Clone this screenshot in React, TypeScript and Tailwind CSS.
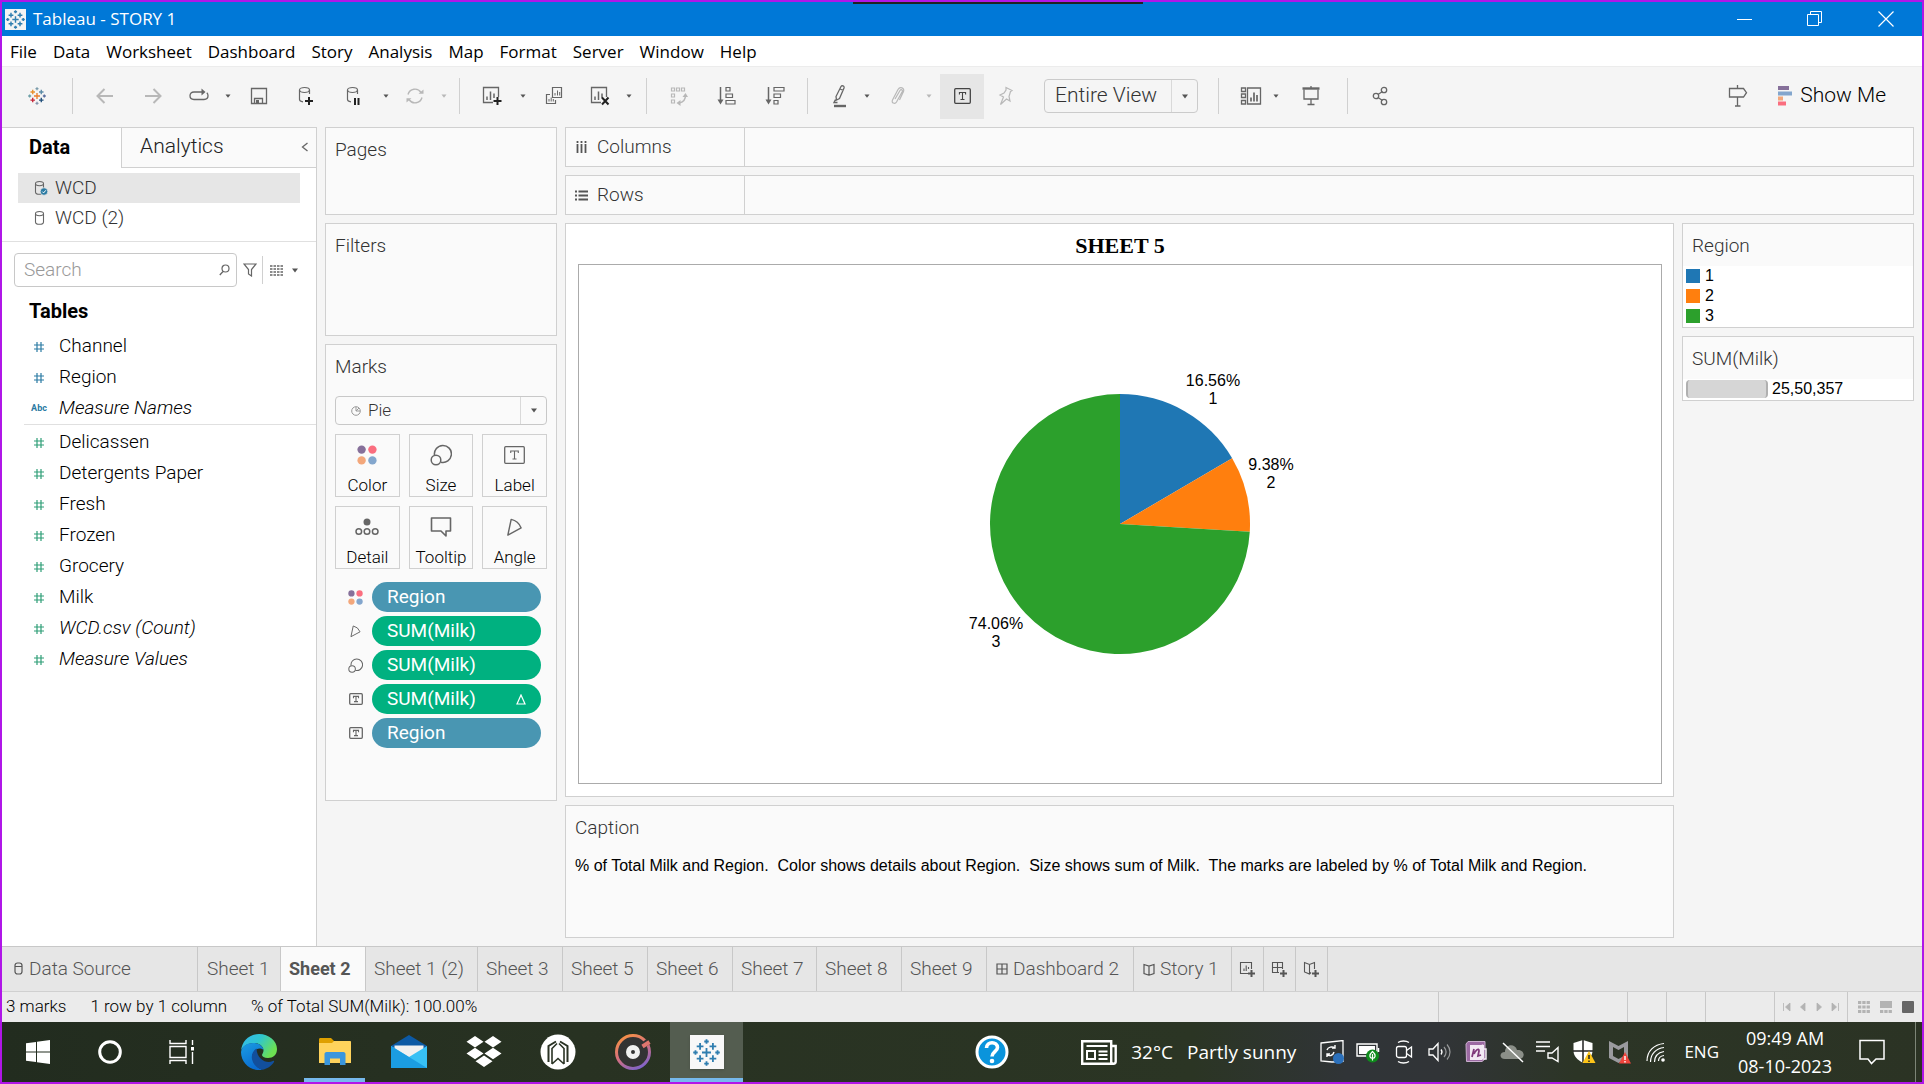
import React from "react";

type SvgProps = { w: number; h: number; children: React.ReactNode; className?: string };

function Svg({ w, h, children, className = "" }: SvgProps) {
  return (
    <svg
      width={w}
      height={h}
      viewBox={`0 0 ${w} ${h}`}
      fill="none"
      stroke="currentColor"
      className={`shrink-0 ${className}`}
      aria-hidden="true"
    >
      {children}
    </svg>
  );
}

/* ---------- shared small drawings ---------- */

const plusMark = (x: number, y: number, r: number) => `M${x - r} ${y}H${x + r}M${x} ${y - r}V${y + r}`;

function TableauMark({ size, colors, weight }: { size: number; colors: string[]; weight: number }) {
  const [center, nw, ne, sw, se, n, e, s, w] = colors;
  return (
    <svg width={size} height={size} viewBox="0 0 24 24" fill="none" strokeWidth={weight} className="shrink-0" aria-hidden="true">
      <path d={plusMark(12, 12, 4)} stroke={center} />
      <path d={plusMark(6.3, 6.6, 3)} stroke={nw} />
      <path d={plusMark(17.7, 6.6, 3)} stroke={ne} />
      <path d={plusMark(6.3, 17.4, 3)} stroke={sw} />
      <path d={plusMark(17.7, 17.4, 3)} stroke={se} />
      <path d={plusMark(12, 2.2, 2)} stroke={n} />
      <path d={plusMark(21.8, 12, 2)} stroke={e} />
      <path d={plusMark(12, 21.8, 2)} stroke={s} />
      <path d={plusMark(2.2, 12, 2)} stroke={w} />
    </svg>
  );
}

const blueMark = Array(9).fill("#2f7eb0");
const colorMark = ["#ea7d2d", "#e8912f", "#5b8aa6", "#c4273a", "#1f4e79", "#7c9cab", "#5a6f9e", "#8494ad", "#6fa0a8"];

function Caret({ className = "text-[#555]" }: { className?: string }) {
  return (
    <Svg w={8} h={5} className={className}>
      <path d="M1 0.5h6L4 4.5z" fill="currentColor" stroke="none" />
    </Svg>
  );
}

function SmallCaret({ className = "text-[#555]" }: { className?: string }) {
  return (
    <Svg w={6} h={4} className={className}>
      <path d="M0.5 0.5h5L3 3.8z" fill="currentColor" stroke="none" />
    </Svg>
  );
}

function Cylinder({ className = "text-[#666]", checked = false }: { className?: string; checked?: boolean }) {
  return (
    <Svg w={15} h={16} className={className}>
      <ellipse cx="5.5" cy="3.6" rx="4" ry="2.1" strokeWidth="1.1" />
      <path d="M1.5 4v8c0 1.3 1.5 2.3 4 2.3s4-1 4-2.3V4" strokeWidth="1.1" />
      {checked && (
        <>
          <circle cx="10" cy="11.5" r="3.8" fill="#2b7ba3" stroke="#e6e6e6" strokeWidth="0.8" />
          <path d="M8.3 11.6l1.3 1.3 2.2-2.6" stroke="#fff" />
        </>
      )}
    </Svg>
  );
}

/* ---------- toolbar drawings ---------- */

const arrowLeft = (
  <Svg w={18} h={18}><path d="M17 9H2M8.5 2L1.5 9l7 7" strokeWidth="2" /></Svg>
);
const arrowRight = (
  <Svg w={18} h={18}><path d="M1 9h15M9.5 2l7 7-7 7" strokeWidth="2" /></Svg>
);
const redoIcon = (
  <Svg w={20} h={18}>
    <path d="M14 5H5c-2.500 0-4 1.500-4 3.800s1.500 3.700 4 3.700h10c2.500 0 4-1.500 4-3.700 0-1.300-.4-2.300-1.200-3" strokeWidth="1.300" />
    <path d="M12.500 1.500L16.500 5l-4 3.500z" fill="currentColor" stroke="none" />
  </Svg>
);
const saveIcon = (
  <Svg w={18} h={18}>
    <path d="M1.500 1.500h15v15h-15zM4.500 16.500v-5h8v5" strokeWidth="1.300" />
    <path d="M6 13h3v3.500H6z" fill="currentColor" stroke="none" />
  </Svg>
);
const dbBase = (
  <>
    <ellipse cx="6.500" cy="4" rx="5" ry="2.500" strokeWidth="1.200" />
    <path d="M1.500 4v9.500c0 1.300 1.300 2 3.500 2.300M11.500 4v4" strokeWidth="1.200" />
  </>
);
const dbPlus = (
  <Svg w={18} h={20}>{dbBase}<path d={plusMark(11, 15, 4)} stroke="#222" strokeWidth="2" /></Svg>
);
const dbPause = (
  <Svg w={18} h={20}>{dbBase}<path d="M9 12v7M12.500 12v7" stroke="#222" strokeWidth="2" /></Svg>
);
const refreshIcon = (
  <Svg w={18} h={18}>
    <path d="M2 7.500A7.200 7.200 0 0 1 15 5.500M16 10.500A7.200 7.200 0 0 1 3 12.500" strokeWidth="1.400" />
    <path d="M12.500 6.800h5V2.500zM5.500 11.200h-5v4.300z" fill="currentColor" stroke="none" />
  </Svg>
);
const sheetBase = (
  <>
    <path d="M11 16.500H1.500v-15h15V11" strokeWidth="1.300" />
    <path d="M5 14v-3.500M8.500 14V5.500M12 12V7.500" strokeWidth="1.500" />
  </>
);
const sheetPlus = (
  <Svg w={20} h={20}>{sheetBase}<path d={plusMark(15.5, 15, 4)} stroke="#222" strokeWidth="2" /></Svg>
);
const sheetClear = (
  <Svg w={20} h={20}>{sheetBase}<path d="M12 11.500l6.500 7M18.500 11.500l-6.500 7" stroke="#222" strokeWidth="2" /></Svg>
);
const duplicateIcon = (
  <Svg w={18} h={20}>
    <path d="M7.500 1.500h9v10h-9zM5 8.500H1.500v9h9V14" strokeWidth="1.200" />
    <path d="M10 9.500V7M12.500 9.500v-5M14.700 9.500V6M4 15.500V13M6.200 15.500v-4M8.300 15.500V13" />
  </Svg>
);
const swapIcon = (
  <Svg w={18} h={20}>
    <path d="M1.500 2h3v3h-3zM6.500 2h3v3h-3zM11.500 2h3v3h-3zM1.500 8h3v3h-3zM1.500 14h3v3h-3z" strokeWidth="1.200" />
    <path d="M15.500 9c0 5-2.500 7.500-6.500 8" strokeWidth="1.500" />
    <path d="M12.500 11l3-4 2.500 4zM10.500 14v6L6.500 17z" fill="currentColor" stroke="none" />
  </Svg>
);
const sortAsc = (
  <Svg w={20} h={20}>
    <path d="M3.500 1v14" strokeWidth="1.500" />
    <path d="M.5 13.500h6l-3 5z" fill="currentColor" stroke="none" />
    <path d="M9 1.500h4v3.500H9zM9 8h6.500v3.500H9zM9 14.500h9V18H9z" strokeWidth="1.200" />
  </Svg>
);
const sortDesc = (
  <Svg w={20} h={20}>
    <path d="M3.500 1v14" strokeWidth="1.500" />
    <path d="M.5 13.500h6l-3 5z" fill="currentColor" stroke="none" />
    <path d="M9 1.500h10v3.500H9zM9 8h6.500v3.500H9zM9 14.500h4V18H9z" strokeWidth="1.200" />
  </Svg>
);
const penIcon = (
  <Svg w={14} h={24}>
    <path d="M8 2.500c1-1.500 3.500-.5 3 1.500L6.500 14.500l-3 1.500-.5-3.500zM7 5l3.500 1.500M2.500 15.500L1 18.500h3.500" strokeWidth="1.300" />
    <path d="M1 22h12" strokeWidth="2.400" />
  </Svg>
);
const clipIcon = (
  <Svg w={16} h={20}>
    <path d="M5 13l5-8.500c1-1.500 3-.5 2.300 1L6.500 16c-1.500 2.500-5.500 1-4-2L8 3.500c2-3.500 7-1.500 5.500 2L9.500 14" strokeWidth="1.200" />
  </Svg>
);
const pinIcon = (
  <Svg w={16} h={20}>
    <path d="M8 1.500l6 3-1.500 1-1.500 5 1 4.500-3.500-2L2.500 18.500l3-7.500L2 9l4-2L8 4z" strokeWidth="1.200" />
  </Svg>
);
const cardsIcon = (
  <Svg w={22} h={20}>
    <path d="M1.500 2h4v3.500h-4zM1.500 8h4v3.500h-4zM1.500 14.500h4V18h-4zM7.500 2h13v16h-13z" strokeWidth="1.300" />
    <path d="M11 15.500v-4M14 15.500v-9M17 15.500V9" strokeWidth="1.700" />
  </Svg>
);
const presentIcon = (
  <Svg w={18} h={20}>
    <path d="M.5 2.500h17" strokeWidth="2.400" />
    <path d="M2 3.500v9.500h14V3.500M9 13v6M5.500 18.500h7M9 0v2" strokeWidth="1.300" />
  </Svg>
);
const shareIcon = (
  <Svg w={16} h={20}>
    <path d="M6 8.500l4.500-3M6 11.500l4.500 3" strokeWidth="1.300" />
    <circle cx="4" cy="10" r="2.700" strokeWidth="1.300" />
    <circle cx="12" cy="4" r="2.700" strokeWidth="1.300" />
    <circle cx="12" cy="16" r="2.700" strokeWidth="1.300" />
  </Svg>
);
const signpostIcon = (
  <Svg w={20} h={22}>
    <path d="M1.500 3.500h14l3 4.200-3 4.300h-14zM9.500 12v9.500M7 21h5.500M9.500 0v3.500" strokeWidth="1.300" />
  </Svg>
);

function LabelIcon({ w, h }: { w: number; h: number }) {
  const cx = w / 2;
  const top = h * 0.28;
  const bottom = h * 0.72;
  const half = w * 0.18;
  return (
    <Svg w={w} h={h}>
      <rect x="0.7" y="0.7" width={w - 1.4} height={h - 1.4} rx="1" strokeWidth="1.300" />
      <path
        d={`M${cx - half} ${top + 2}V${top}H${cx + half}V${top + 2}M${cx} ${top}V${bottom}M${cx - 2} ${bottom}H${cx + 2}`}
        strokeWidth="1.100"
      />
    </Svg>
  );
}

function ColorDots({ size }: { size: number }) {
  return (
    <svg width={size} height={size} viewBox="0 0 20 20" className="shrink-0" aria-hidden="true">
      <circle cx="4.600" cy="4.600" r="4.200" fill="#86709a" />
      <circle cx="15.400" cy="4.600" r="4.200" fill="#fa6e7f" />
      <circle cx="4.600" cy="15.400" r="4.200" fill="#f3a77b" />
      <circle cx="15.400" cy="15.400" r="4.200" fill="#83a6cd" />
    </svg>
  );
}

function SizeIcon({ size }: { size: number }) {
  return (
    <svg width={size} height={size} viewBox="0 0 22 22" fill="none" stroke="currentColor" strokeWidth="1.500" className="shrink-0" aria-hidden="true">
      <path d="M4.500 11.200A8.500 8.500 0 1 1 11 18.200" />
      <circle cx="6" cy="16" r="4.800" />
    </svg>
  );
}

function AngleIcon({ size }: { size: number }) {
  return (
    <svg width={size} height={size} viewBox="0 0 20 20" fill="none" stroke="currentColor" strokeWidth="1.500" className="shrink-0" aria-hidden="true">
      <path d="M6.500 1.500Q14 3 17 10.500L3 18z" strokeLinejoin="round" />
    </svg>
  );
}

const detailIcon = (
  <Svg w={24} h={18}>
    <circle cx="12" cy="4" r="3.500" fill="currentColor" stroke="none" />
    <circle cx="3.800" cy="13.500" r="2.800" strokeWidth="1.500" />
    <circle cx="12" cy="13.500" r="2.800" strokeWidth="1.500" />
    <circle cx="20.200" cy="13.500" r="2.800" strokeWidth="1.500" />
  </Svg>
);
const tooltipIcon = (
  <Svg w={22} h={20}>
    <path d="M1.500 1h19v13h-4.500v5l-5-5H1.500z" strokeWidth="1.600" strokeLinejoin="round" />
  </Svg>
);

/* ---------- toolbar ---------- */

function Tool({ label, width, children, dim = false }: { label: string; width: string; children: React.ReactNode; dim?: boolean }) {
  return (
    <button
      type="button"
      aria-label={label}
      className={`flex h-full shrink-0 items-center justify-center ${width} ${dim ? "text-[#b8b8b8]" : "text-[#666]"}`}
    >
      {children}
    </button>
  );
}

function Sep({ className }: { className: string }) {
  return <span className={`h-9 w-px shrink-0 bg-[#d0d0d0] ${className}`} />;
}

function CaretTool({ label, dim = false }: { label: string; dim?: boolean }) {
  return (
    <Tool label={label} width="w-3.5" dim={dim}>
      <SmallCaret className={dim ? "text-[#b8b8b8]" : "text-[#555]"} />
    </Tool>
  );
}

function Toolbar() {
  return (
    <div className="flex h-[61px] items-center border-t border-[#ececec] bg-[#f5f5f5] pb-0.5">
      <Tool label="Start page" width="w-[70px]">
        <TableauMark size={18} colors={colorMark} weight={1.8} />
      </Tool>
      <Sep className="mr-2" />
      <Tool label="Undo" width="w-12" dim>{arrowLeft}</Tool>
      <Tool label="Redo" width="w-12" dim>{arrowRight}</Tool>
      <Tool label="Replay animation" width="w-11">{redoIcon}</Tool>
      <CaretTool label="Replay speed" />
      <Tool label="Save" width="w-12">{saveIcon}</Tool>
      <Tool label="New data source" width="w-12">{dbPlus}</Tool>
      <Tool label="Pause auto updates" width="w-12">{dbPause}</Tool>
      <CaretTool label="Auto update options" />
      <Tool label="Run update" width="w-11" dim>{refreshIcon}</Tool>
      <CaretTool label="Update options" dim />
      <Sep className="mr-2 ml-2" />
      <Tool label="New worksheet" width="w-12">{sheetPlus}</Tool>
      <CaretTool label="New worksheet options" />
      <Tool label="Duplicate sheet" width="w-12">{duplicateIcon}</Tool>
      <Tool label="Clear sheet" width="w-11">{sheetClear}</Tool>
      <CaretTool label="Clear options" />
      <Sep className="mr-2 ml-2.5" />
      <Tool label="Swap rows and columns" width="w-12" dim>{swapIcon}</Tool>
      <Tool label="Sort ascending" width="w-12">{sortAsc}</Tool>
      <Tool label="Sort descending" width="w-12">{sortDesc}</Tool>
      <Sep className="mr-3 ml-2" />
      <Tool label="Highlight" width="w-10">{penIcon}</Tool>
      <CaretTool label="Highlight options" />
      <Tool label="Group members" width="w-12" dim>{clipIcon}</Tool>
      <CaretTool label="Group options" dim />
      <button type="button" aria-label="Show mark labels" className="ml-1 flex h-[45px] w-11 shrink-0 items-center justify-center bg-[#e6e6e6] text-[#444]">
        <LabelIcon w={17} h={16} />
      </button>
      <Tool label="Fix axes" width="w-11" dim>{pinIcon}</Tool>
      <div className="ml-4 flex h-[34px] w-[154px] shrink-0 items-center rounded-sm border border-[#cbcbcb]">
        <select
          aria-label="Fit"
          className="h-full min-w-0 flex-1 appearance-none bg-transparent pl-2.5 text-[21px] font-light text-[#333] outline-none"
        >
          <option>Entire View</option>
        </select>
        <span className="flex h-full w-[26px] items-center justify-center border-l border-[#d9d9d9]">
          <Caret />
        </span>
      </div>
      <Sep className="mr-3.5 ml-5" />
      <Tool label="Show or hide cards" width="w-9">{cardsIcon}</Tool>
      <CaretTool label="Card options" />
      <Tool label="Presentation mode" width="w-14">{presentIcon}</Tool>
      <Sep className="mx-2" />
      <Tool label="Share" width="w-12">{shareIcon}</Tool>
      <span className="flex-1" />
      <Tool label="Guide" width="w-12">{signpostIcon}</Tool>
      <button type="button" className="mr-9 ml-4 flex h-full shrink-0 items-center gap-2 text-[21px] font-light text-black">
        <Svg w={14} h={20}>
          <path d="M0 2h11" stroke="#86709a" strokeWidth="4" />
          <path d="M0 7.500h14" stroke="#83a6cd" strokeWidth="4" />
          <path d="M0 12.500h5" stroke="#f3a77b" strokeWidth="4" />
          <path d="M0 17.500h8" stroke="#fa6e7f" strokeWidth="4" />
        </Svg>
        Show Me
      </button>
    </div>
  );
}

/* ---------- data pane ---------- */

const blue = "text-[#2b7ba3]";
const green = "text-[#2f9e77]";

const dimensions = [
  { name: "Channel", italic: false, abc: false },
  { name: "Region", italic: false, abc: false },
  { name: "Measure Names", italic: true, abc: true },
];
const measures = [
  { name: "Delicassen", italic: false },
  { name: "Detergents Paper", italic: false },
  { name: "Fresh", italic: false },
  { name: "Frozen", italic: false },
  { name: "Grocery", italic: false },
  { name: "Milk", italic: false },
  { name: "WCD.csv (Count)", italic: true },
  { name: "Measure Values", italic: true },
];

function FieldRow({ name, italic, abc = false, tone }: { name: string; italic: boolean; abc?: boolean; tone: string }) {
  return (
    <li className="flex h-[31px] items-center pl-7">
      <span className={`flex w-[18px] shrink-0 justify-center ${tone}`}>
        {abc ? (
          <span className="text-[9px] font-bold">Abc</span>
        ) : (
          <Svg w={12} h={12}>
            <path d="M4 1v10M8 1v10M1 4h10M1 8h10" strokeWidth="1.200" />
          </Svg>
        )}
      </span>
      <span className={`pl-[11px] text-[19px] font-light text-black ${italic ? "italic" : ""}`}>{name}</span>
    </li>
  );
}

function DataPane() {
  return (
    <aside className="flex w-[315px] shrink-0 flex-col border-t border-r border-[#d0d0d0] bg-white">
      <div className="flex h-10">
        <button type="button" className="w-[119px] pb-0.5 pl-[27px] text-left text-xl font-bold text-black">Data</button>
        <button type="button" className="flex flex-1 items-center justify-between border-b border-l border-[#d0d0d0] bg-[#fafafa] pr-[7px] pb-0.5 pl-[18px] text-[21px] font-light text-[#222]">
          Analytics
          <Svg w={8} h={10} className="text-[#666]"><path d="M6.500 1L1.500 5l5 4" strokeWidth="1.300" /></Svg>
        </button>
      </div>
      <ul className="px-4 pt-[5px] pb-2 text-[19px] font-light text-[#333]">
        <li className="flex h-[30px] items-center gap-1.5 bg-[#e6e6e6] pl-4"><Cylinder checked /> WCD</li>
        <li className="flex h-[30px] items-center gap-1.5 pl-4"><Cylinder /> WCD (2)</li>
      </ul>
      <div className="flex items-center border-t border-[#e0e0e0] pt-[11px] pl-3">
        <label className="flex h-[34px] w-[223px] items-center rounded-sm border border-[#c8c8c8] pr-1.5 pl-[9px]">
          <input aria-label="Search" placeholder="Search" className="min-w-0 flex-1 text-[19px] font-light outline-none placeholder:text-[#999]" />
          <Svg w={11} h={12} className="text-[#666]">
            <circle cx="6.500" cy="4.500" r="3.500" strokeWidth="1.200" /><path d="M4 7.500L.8 11" strokeWidth="1.300" />
          </Svg>
        </label>
        <button type="button" aria-label="Filter fields" className="flex w-[25px] justify-center text-[#666]">
          <Svg w={14} h={14}><path d="M1 1h12L8.500 6.500V13L5.500 11V6.500z" strokeWidth="1.200" /></Svg>
        </button>
        <span className="h-7 w-px bg-[#d0d0d0]" />
        <button type="button" aria-label="View as" className="flex flex-1 items-center gap-2 pl-[7px] text-[#666]">
          <Svg w={13} h={11}><path d="M0 1h13M0 4h13M0 7h13M0 10h13" strokeWidth="1.700" strokeDasharray="2.500 1" /></Svg>
          <Caret />
        </button>
      </div>
      <h2 className="pt-[10px] pb-[6px] pl-[27px] text-xl leading-7 font-bold text-black">Tables</h2>
      <ul>{dimensions.map((f) => <FieldRow key={f.name} {...f} tone={blue} />)}</ul>
      <div className="ml-[22px] border-t border-[#e0e0e0] pt-0.5" />
      <ul>{measures.map((f) => <FieldRow key={f.name} {...f} tone={green} />)}</ul>
    </aside>
  );
}

/* ---------- cards ---------- */

const markButtons: { label: string; icon: React.ReactNode }[] = [
  { label: "Color", icon: <ColorDots size={20} /> },
  { label: "Size", icon: <SizeIcon size={22} /> },
  { label: "Label", icon: <LabelIcon w={21} h={18} /> },
  { label: "Detail", icon: detailIcon },
  { label: "Tooltip", icon: tooltipIcon },
  { label: "Angle", icon: <AngleIcon size={19} /> },
];

const pills: { label: string; icon: React.ReactNode; discrete: boolean; calc?: boolean }[] = [
  { label: "Region", icon: <ColorDots size={15} />, discrete: true },
  { label: "SUM(Milk)", icon: <AngleIcon size={13} />, discrete: false },
  { label: "SUM(Milk)", icon: <SizeIcon size={15} />, discrete: false },
  { label: "SUM(Milk)", icon: <LabelIcon w={14} h={12} />, discrete: false, calc: true },
  { label: "Region", icon: <LabelIcon w={14} h={12} />, discrete: true },
];

const card = "border border-[#d0d0d0] bg-[#fafafa]";

function CardTitle({ children }: { children: React.ReactNode }) {
  return <h3 className="px-[9px] pt-2 text-[19px] leading-7 font-light text-[#333]">{children}</h3>;
}

function Cards() {
  return (
    <div className="flex w-[232px] shrink-0 flex-col gap-2">
      <section className={`h-[88px] ${card}`}><CardTitle>Pages</CardTitle></section>
      <section className={`h-[113px] ${card}`}><CardTitle>Filters</CardTitle></section>
      <section className={`h-[457px] ${card}`}>
        <CardTitle>Marks</CardTitle>
        <div className="mx-[9px] mt-[15px] flex h-[29px] items-center rounded-sm border border-[#c8c8c8]">
          <Svg w={10} h={10} className="ml-[15px] text-[#999]">
            <circle cx="5" cy="5" r="4.300" /><path d="M5 1v4h4M5 5l3-3" />
          </Svg>
          <select aria-label="Mark type" className="h-full min-w-0 flex-1 appearance-none pl-[7px] text-[17px] font-light text-[#333] outline-none">
            <option>Pie</option>
          </select>
          <span className="flex h-full w-[26px] items-center justify-center border-l border-[#d9d9d9]"><Caret /></span>
        </div>
        <div className="mx-[9px] mt-[9px] grid grid-cols-3 gap-x-[9px] gap-y-[9px]">
          {markButtons.map((b) => (
            <button key={b.label} type="button" className="flex h-[63px] flex-col items-center justify-between border border-[#d0d0d0] pt-2 text-[#666]">
              <span className="flex h-6 items-center">{b.icon}</span>
              <span className="text-[17px] leading-[22px] font-light text-black">{b.label}</span>
            </button>
          ))}
        </div>
        <ul className="mt-[13px] flex flex-col gap-1 pr-[15px] pl-[22px]">
          {pills.map((p, i) => (
            <li key={i} className="flex items-center gap-[9px] text-[#666]">
              <span className="flex w-[15px] justify-center">{p.icon}</span>
              <button
                type="button"
                className={`flex h-[30px] flex-1 items-center justify-between rounded-full px-[15px] text-[19px] text-white ${p.discrete ? "bg-[#4996b2]" : "bg-[#00b180]"}`}
              >
                {p.label}
                {p.calc && <Svg w={10} h={11}><path d="M5 1L9 10H1z" strokeWidth="1.200" /></Svg>}
              </button>
            </li>
          ))}
        </ul>
      </section>
    </div>
  );
}

/* ---------- chart ---------- */

const slices = [
  { region: "1", share: 16.56, color: "#1f77b4", x: 93, y: -138 },
  { region: "2", share: 9.38, color: "#ff7f0e", x: 151, y: -54 },
  { region: "3", share: 74.06, color: "#2ca02c", x: -124, y: 105 },
];

function PieChart() {
  const r = 130;
  const point = (t: number) => `${r * Math.sin(2 * Math.PI * t)} ${-r * Math.cos(2 * Math.PI * t)}`;
  let start = 0;
  return (
    <svg width="380" height="320" viewBox="-190 -160 380 320" role="img" aria-label="Share of Milk by Region">
      {slices.map((s) => {
        const end = start + s.share / 100;
        const d = `M0 0L${point(start)}A${r} ${r} 0 ${s.share > 50 ? 1 : 0} 1 ${point(end)}Z`;
        start = end;
        return <path key={s.region} d={d} fill={s.color} />;
      })}
      {slices.map((s) => (
        <g key={s.region} fontSize="16" textAnchor="middle" fill="#000" fontFamily="Liberation Sans, Arial, sans-serif">
          <text x={s.x} y={s.y}>{s.share.toFixed(2)}%</text>
          <text x={s.x} y={s.y + 18}>{s.region}</text>
        </g>
      ))}
    </svg>
  );
}

function Shelf({ label, icon }: { label: string; icon: React.ReactNode }) {
  return (
    <div className={`flex h-10 items-center ${card}`}>
      <div className="flex h-full w-[179px] items-center gap-[9px] border-r border-[#d0d0d0] pl-[9px] text-[19px] font-light text-[#333]">
        {icon}
        {label}
      </div>
    </div>
  );
}

function Canvas() {
  return (
    <div className="flex min-w-0 flex-1 flex-col gap-2">
      <Shelf
        label="Columns"
        icon={<Svg w={13} h={13}><path d="M2.500 0v2M6.500 0v2M10.500 0v2M2.500 3v9M6.500 3v9M10.500 3v9" className="text-[#555]" strokeWidth="1.800" /></Svg>}
      />
      <Shelf
        label="Rows"
        icon={<Svg w={13} h={13}><path d="M0 2.500h2M0 6.500h2M0 10.500h2M3.500 2.500H13M3.500 6.500H13M3.500 10.500H13" className="text-[#555]" strokeWidth="1.800" /></Svg>}
      />
      <div className="flex min-h-0 flex-1 gap-2">
        <div className="flex min-w-0 flex-1 flex-col gap-2">
          <section className="flex flex-1 flex-col border border-[#d0d0d0] bg-white pr-[11px] pb-3 pl-3">
            <h1 className="h-10 text-center font-['Liberation_Serif',serif] text-[22px] leading-[44px] font-bold text-black">SHEET 5</h1>
            <div className="flex flex-1 items-center justify-center border border-[#ababab]">
              <PieChart />
            </div>
          </section>
          <section className={`h-[133px] ${card}`}>
            <CardTitle>Caption</CardTitle>
            <p className="px-[9px] pt-3 font-['Liberation_Sans',Arial,sans-serif] text-base leading-6 whitespace-pre-wrap text-black">
              {"% of Total Milk and Region.  Color shows details about Region.  Size shows sum of Milk.  The marks are labeled by % of Total Milk and Region."}
            </p>
          </section>
        </div>
        <div className="flex w-[232px] shrink-0 flex-col gap-2">
          <section className={card}>
            <div className="h-[42px]"><CardTitle>Region</CardTitle></div>
            <ul className="bg-white pb-px font-['Liberation_Sans',Arial,sans-serif] text-base text-black">
              {slices.map((s) => (
                <li key={s.region} className="flex h-5 items-center gap-[5px] pl-[3px]">
                  <Svg w={14} h={14}><rect width="14" height="14" fill={s.color} stroke="none" /></Svg>
                  {s.region}
                </li>
              ))}
            </ul>
          </section>
          <section className={card}>
            <div className="h-[42px]"><CardTitle>SUM(Milk)</CardTitle></div>
            <div className="flex items-center gap-1 bg-white pt-px pb-0.5 pl-[3px] font-['Liberation_Sans',Arial,sans-serif] text-base leading-[18px] text-black">
              <span className="h-[18px] w-[82px] rounded-sm border-x-2 border-[#b0b0b0] bg-[#d6d6d6]" />
              25,50,357
            </div>
          </section>
        </div>
      </div>
    </div>
  );
}

/* ---------- sheet tabs and status ---------- */

const plusSmall = <path d={plusMark(12.5, 12.5, 3.5)} strokeWidth="2" />;

const tabs: { label: string; icon?: React.ReactNode; width: string; active?: boolean }[] = [
  { label: "Data Source", width: "w-[196px] pl-3", icon: <Svg w={10} h={14}><rect x="1" y="1" width="7" height="11" rx="2.500" strokeWidth="1.200" /><path d="M1 4.500h7" /></Svg> },
  { label: "Sheet 1", width: "w-[83px] pl-[9px]" },
  { label: "Sheet 2", width: "w-[85px] pl-2", active: true },
  { label: "Sheet 1 (2)", width: "w-[112px] pl-2" },
  { label: "Sheet 3", width: "w-[85px] pl-2" },
  { label: "Sheet 5", width: "w-[85px] pl-2" },
  { label: "Sheet 6", width: "w-[85px] pl-2" },
  { label: "Sheet 7", width: "w-[84px] pl-2" },
  { label: "Sheet 8", width: "w-[85px] pl-2" },
  { label: "Sheet 9", width: "w-[85px] pl-2" },
  { label: "Dashboard 2", width: "w-[147px] pl-[9px]", icon: <Svg w={12} h={12}><path d="M1 1h10v10H1zM6 1v10M1 6h10" strokeWidth="1.200" /></Svg> },
  { label: "Story 1", width: "w-[98px] pl-[9px]", icon: <Svg w={12} h={13}><path d="M1 1.500l5 1.500 5-1.500v9L6 12.200 1 10.500zM6 3v9" strokeWidth="1.200" /></Svg> },
];

const newTabs = [
  { label: "New worksheet", icon: <Svg w={17} h={17}><path d="M9 12.500H1.500v-11h11V8M5 10V7.500M7.200 10V4.500M9.500 8V6" strokeWidth="1.100" />{plusSmall}</Svg> },
  { label: "New dashboard", icon: <Svg w={17} h={17}><path d="M8 11.500H1.500v-10h10V8M6.500 1.500v10M1.500 6.500h10" strokeWidth="1.100" />{plusSmall}</Svg> },
  { label: "New story", icon: <Svg w={17} h={17}><path d="M8 11.500L6.500 13l-5-2V1.500l5 2 5-2V8M6.500 3.500V13" strokeWidth="1.100" />{plusSmall}</Svg> },
];

function SheetTabs() {
  return (
    <nav className="flex h-[45px] border-t border-[#c8c8c8] bg-[#e6e6e6] text-[19px] font-light text-[#555]">
      {tabs.map((t) => (
        <button
          key={t.label}
          type="button"
          className={`flex shrink-0 items-center gap-[5px] border-r border-[#c8c8c8] whitespace-nowrap ${t.width} ${t.active ? "bg-[#fafafa] text-lg font-bold" : ""}`}
        >
          {t.icon}
          {t.label}
        </button>
      ))}
      {newTabs.map((t) => (
        <button key={t.label} type="button" aria-label={t.label} className="flex w-8 shrink-0 items-center justify-center border-r border-[#c8c8c8]">
          {t.icon}
        </button>
      ))}
    </nav>
  );
}

function StatusBar() {
  return (
    <div className="flex h-[31px] items-center border-t border-[#d0d0d0] bg-[#ebebeb] text-[17px] font-light text-black">
      <span className="pl-1">3 marks</span>
      <span className="pl-6">1 row by 1 column</span>
      <span className="pl-6">% of Total SUM(Milk): 100.00%</span>
      <span className="flex-1" />
      <span className="h-full w-[189px] border-l border-[#c8c8c8]" />
      <span className="h-full w-[39px] border-l border-[#c8c8c8]" />
      <span className="h-full w-[39px] border-l border-[#c8c8c8]" />
      <span className="h-full w-[69px] border-l border-[#c8c8c8]" />
      <div className="flex h-full w-[73px] items-center justify-center gap-1 border-l border-[#c8c8c8] text-[#b3b3b3]">
        {["M2.500 2v8M9 2L4.500 6 9 10z", "M8 2L3.500 6 8 10z", "M4 2l4.500 4L4 10z", "M9.500 2v8M3 2l4.500 4L3 10z"].map((d) => (
          <button key={d} type="button" aria-label="Go to sheet" className="shrink-0">
            <Svg w={12} h={12}><path d={d} fill="currentColor" strokeWidth="0.8" /></Svg>
          </button>
        ))}
      </div>
      <div className="flex h-full w-[75px] items-center justify-between border-l border-[#c8c8c8] pr-2 pl-2.5">
        <button type="button" aria-label="Sheet sorter" className="text-[#b3b3b3]">
          <Svg w={12} h={12}><path d="M0 1.500h12M0 6h12M0 10.500h12" strokeWidth="3" strokeDasharray="3.300 1" /></Svg>
        </button>
        <button type="button" aria-label="Filmstrip" className="text-[#b3b3b3]">
          <Svg w={12} h={12}><path d="M0 3.500h12" strokeWidth="7" /><path d="M0 10.500h12" strokeWidth="3" strokeDasharray="3.300 1" /></Svg>
        </button>
        <button type="button" aria-label="Tabs" className="text-[#666]">
          <Svg w={12} h={12}><rect width="12" height="12" rx="1" fill="currentColor" stroke="none" /></Svg>
        </button>
      </div>
    </div>
  );
}

/* ---------- taskbar ---------- */

const startIcon = (
  <svg width="24" height="24" viewBox="0 0 24 24" fill="#fff" aria-hidden="true">
    <path d="M0 3.300L10 2v9.500H0zM11 1.800L24 0v11.500H11zM0 12.500h10V22L0 20.700zM11 12.500h13V24l-13-1.800z" />
  </svg>
);
const edgeIcon = (
  <svg width="36" height="36" viewBox="0 0 36 36" aria-hidden="true">
    <defs>
      <linearGradient id="edgeTop" x1="0" y1="0" x2="1" y2="0.500">
        <stop offset="0" stopColor="#35b8f0" /><stop offset="0.500" stopColor="#2fc6cf" /><stop offset="1" stopColor="#6ce052" />
      </linearGradient>
      <linearGradient id="edgeSide" x1="0" y1="0" x2="0.500" y2="1">
        <stop offset="0" stopColor="#1b9de2" /><stop offset="1" stopColor="#0a6bd0" />
      </linearGradient>
    </defs>
    <path d="M0 17C1 7 8 0 18 0c10 0 18 7 18 15 0 6-4 9-9 9-4 0-6-1.500-6-3 0-1 1.500-2 1.500-4.500C22.500 12 18 9 13 9 6 9 1 13 0 17z" fill="url(#edgeTop)" />
    <path d="M0 18C1 12 6 9 12 9c6 0 10 3 10.500 7-5-4-12 1-11 8 .8 6 5 10 9.500 11.700C10 38 0 29 0 18z" fill="url(#edgeSide)" />
    <path d="M15.500 14.500c-3 2-5.500 6-4.500 10.500 1 5 5 9.500 10 10.700 5-.5 9.500-3.700 12-7.700.5-1-.3-1.500-1.200-1C26 30 16 26 15.500 14.500z" fill="#124f9c" />
  </svg>
);
const folderIcon = (
  <svg width="32" height="28" viewBox="0 0 32 28" aria-hidden="true">
    <path d="M0 1.500C0 .5.500 0 1.500 0H12l3 3v5H0z" fill="#dfa000" />
    <path d="M0 5h13l2-2h16c.6 0 1 .4 1 1v21H0z" fill="#ffd35c" />
    <path d="M5.500 27V16c0-1 .8-2 2-2h17c1.200 0 2 1 2 2v11h-5.500v-6.500h-10V27z" fill="#3a96dd" />
  </svg>
);
const mailIcon = (
  <svg width="36" height="34" viewBox="0 0 36 34" aria-hidden="true">
    <path d="M0 11L18 0l18 11v5H0z" fill="#0c59a4" />
    <path d="M3.500 10.500h29V20L18 26 3.500 20z" fill="#f0f0f0" />
    <path d="M0 11l18 11L36 11v22H0z" fill="#37c0f5" />
    <path d="M0 11l36 22H0z" fill="#1b9de2" />
  </svg>
);
const dropboxIcon = (
  <svg width="36" height="32" viewBox="0 0 36 32" fill="#fff" aria-hidden="true">
    <path d="M9 0l8.500 5.800L9 11.500.5 5.800zM27 0l8.500 5.800-8.500 5.700-8.500-5.700zM9 11.800l8.500 5.700L9 23.300.5 17.500zM27 11.800l8.500 5.700-8.500 5.800-8.500-5.800zM18 19.500l8.500 5.700L18 31l-8.500-5.800z" />
  </svg>
);
const arcIcon = (
  <svg width="36" height="36" viewBox="0 0 36 36" fill="none" aria-hidden="true">
    <circle cx="18" cy="18" r="17.500" fill="#fff" />
    <path d="M11.500 29.500V13.500L17 9v16.500l-4 4M24.500 29.500V13.500L19 9v16.500l4 4" stroke="none" />
    <path d="M8.500 28V12L16 7.500M27.500 28V12L20 7.500" stroke="#2a3324" strokeWidth="2" />
    <path d="M12 30V14.500L17 9.500M24 30V14.500L19 9.500M12 30l6-5.500 6 5.500" stroke="#2a3324" strokeWidth="1.600" />
  </svg>
);
const grooveIcon = (
  <svg width="36" height="36" viewBox="0 0 36 36" fill="none" aria-hidden="true">
    <defs>
      <linearGradient id="groove" x1="0.200" y1="0" x2="0.700" y2="1">
        <stop offset="0" stopColor="#f59145" /><stop offset="0.500" stopColor="#d7707d" /><stop offset="1" stopColor="#8063c9" />
      </linearGradient>
    </defs>
    <circle cx="18" cy="18" r="16.500" fill="#333" stroke="url(#groove)" strokeWidth="3" />
    <circle cx="18" cy="18" r="4.500" stroke="#f0f0f0" strokeWidth="5" />
    <path d="M27 12.500l6-5" stroke="#333" strokeWidth="6" />
    <path d="M27.500 12.500l7-4.500" stroke="#e0766f" strokeWidth="4" />
  </svg>
);

function TaskButton({ label, width, children, state = "border-transparent" }: { label: string; width: string; children: React.ReactNode; state?: string }) {
  return (
    <button type="button" aria-label={label} className={`flex h-full shrink-0 items-center justify-center border-b-4 pt-1 ${width} ${state}`}>
      {children}
    </button>
  );
}

function Tray() {
  const box = "flex w-9 shrink-0 justify-center";
  return (
    <div className="flex items-center text-white">
      <span className={box}>
        <Svg w={24} h={24}>
          <path d="M1 3l22-2.500v21L12 22l-11-1z" strokeWidth="1.300" />
          <path d="M7 10c1-3 5-4 8-2M15 5v3h-3M14 12c-1 4-5 4.500-7 2.500M7 17v-3h3" strokeWidth="1.400" />
          <circle cx="18.500" cy="18.500" r="5.500" fill="#2b70bb" stroke="none" />
        </Svg>
      </span>
      <span className={box}>
        <Svg w={24} h={22}>
          <path d="M1 3h20v12H1z" strokeWidth="1.400" />
          <path d="M3 5h16v8H3z" fill="currentColor" stroke="none" /><path d="M22.500 7v4" strokeWidth="1.500" />
          <circle cx="16.500" cy="15" r="6.500" fill="#0f8a1c" stroke="none" />
          <path d="M16.500 10.500c4 3.500 3 6.500 0 7-3-.5-4-3.500 0-7zM16.500 13v6.500" strokeWidth="1.200" />
        </Svg>
      </span>
      <span className={box}>
        <Svg w={18} h={24}>
          <rect x="1.500" y="6.500" width="10" height="11" rx="2" strokeWidth="1.300" />
          <path d="M11.500 10.500l5-3.500v10l-5-3.500M3 2.500c3-2 8-2 11 0M3 21.500c3 2 8 2 11 0" strokeWidth="1.300" />
        </Svg>
      </span>
      <span className={box}>
        <Svg w={24} h={20}>
          <path d="M1 7h4l5-5.500v17L5 13H1z" strokeWidth="1.300" />
          <path d="M13 7.500c1.200 1.500 1.200 3.500 0 5" strokeWidth="1.300" />
          <path d="M16 5c2.500 3 2.500 7 0 10M19 2.500c4 4.500 4 10.500 0 15" strokeWidth="1.200" opacity="0.500" />
        </Svg>
      </span>
      <span className={box}>
        <Svg w={24} h={24}>
          <path d="M4 1.500h17V19L18 21.500H2.500L2 4z" fill="#9c6aa3" stroke="#c9aecd" />
          <path d="M6 5h14v13l-2 2H6z" fill="#f3eaf4" stroke="none" />
          <path d="M18.500 4.500v4.500H22v10h-3" stroke="#f3eaf4" strokeWidth="1.500" />
          <path d="M8 17l2-8M10 14c1-3 5-7 5-3l-1 5 3-1" stroke="#80397b" strokeWidth="1.800" />
        </Svg>
      </span>
      <span className={box}>
        <Svg w={26} h={22}>
          <path d="M6 18c-6 0-6-7 0-7 0-8 10-9 12-2 8-1 9 9 2 9z" fill="#8b8f88" stroke="none" />
          <path d="M4 2l20 19" strokeWidth="1.500" />
        </Svg>
      </span>
      <span className={box}>
        <Svg w={24} h={24}>
          <path d="M0 2h14M0 6.500h14M0 11h9" strokeWidth="1.600" />
          <path d="M12 13h4l6-5.500v14L16 18h-4z" strokeWidth="1.400" />
        </Svg>
      </span>
      <span className={box}>
        <Svg w={24} h={26}>
          <path d="M11 1l9.500 3v8c0 5-4 9-9.500 12C5.500 21 1.500 17 1.500 12V4z" fill="#fff" stroke="none" />
          <path d="M11 1v23M1 12h20" stroke="#222" strokeWidth="1.500" />
          <path d="M17 12l6.500 12h-13z" fill="#fcc419" stroke="none" /><path d="M17 16v4M17 21.500v1.500" stroke="#222" strokeWidth="1.500" />
        </Svg>
      </span>
      <span className={box}>
        <Svg w={24} h={26}>
          <path d="M1 2l9.500 5L20 2v17l-9.500 5L1 19z" fill="#9a9a9e" stroke="none" />
          <path d="M5 8l5.500 3L16 8v9l-5.500 3L5 17z" fill="#2b3325" stroke="none" />
          <path d="M17 13l6 11.500H11z" fill="#f0443c" stroke="none" /><path d="M17 17v4M17 22v1.500" strokeWidth="1.400" />
        </Svg>
      </span>
      <span className={box}>
        <Svg w={20} h={24}>
          <circle cx="17" cy="20" r="1.800" fill="currentColor" stroke="none" />
          <path d="M12.500 21c0-3 2-5 5.500-5.500M8.500 22c0-6 4-9.500 9.500-10.500M4.500 22C4.500 14 10 8.500 18 7.500M1 21C1 11 8 4.500 18 3.500" strokeWidth="1.200" />
        </Svg>
      </span>
    </div>
  );
}

function Taskbar() {
  return (
    <footer className="flex h-[60px] items-center bg-[linear-gradient(90deg,#222c1f_0%,#283222_30%,#2b3524_62%,#303437_70%,#313437_75%,#2c3526_82%,#2b3324_100%)] font-['Open_Sans','Noto_Sans',sans-serif] text-white">
      <TaskButton label="Start" width="w-[72px]">{startIcon}</TaskButton>
      <TaskButton label="Cortana" width="w-[72px]">
        <Svg w={24} h={24}><circle cx="12" cy="12" r="10.300" strokeWidth="3" /></Svg>
      </TaskButton>
      <TaskButton label="Task view" width="w-[72px]">
        <Svg w={26} h={24}>
          <path d="M1 0v3.500h16V0M1 6.500h16v11H1zM1 24v-3.500h16V24M23.500 0v5M23.500 12v12" strokeWidth="1.400" />
          <path d="M23.500 7v3.500" strokeWidth="3" />
        </Svg>
      </TaskButton>
      <TaskButton label="Microsoft Edge" width="mr-0.5 ml-1 w-[74px]">{edgeIcon}</TaskButton>
      <TaskButton label="File Explorer" width="mx-1.5 w-[61px]" state="border-[#76b9ed]">{folderIcon}</TaskButton>
      <TaskButton label="Mail" width="w-[75px]">{mailIcon}</TaskButton>
      <TaskButton label="Dropbox" width="w-[75px]">{dropboxIcon}</TaskButton>
      <TaskButton label="Launcher" width="w-[74px]">{arcIcon}</TaskButton>
      <TaskButton label="Groove Music" width="w-[75px]">{grooveIcon}</TaskButton>
      <TaskButton label="Tableau" width="w-[73px] bg-[#545d50]" state="border-[#76b9ed]">
        <span className="flex size-[34px] items-center justify-center bg-[#f8f8f8] shadow-sm">
          <TableauMark size={27} colors={blueMark} weight={1.6} />
        </span>
      </TaskButton>
      <span className="flex-1" />
      <TaskButton label="Help" width="w-[76px]">
        <svg width="34" height="34" viewBox="0 0 34 34" fill="none" aria-hidden="true">
          <circle cx="17" cy="17" r="15" fill="#0a94dc" stroke="#fff" strokeWidth="3" />
          <path d="M11.500 13c0-7 11-7 11-.5 0 4-5.500 4.500-5.500 9" stroke="#fff" strokeWidth="3.600" />
          <circle cx="17" cy="26" r="2.300" fill="#fff" />
        </svg>
      </TaskButton>
      <button type="button" className="ml-[51px] flex h-full shrink-0 items-center gap-3.5 text-[19px] whitespace-nowrap">
        <Svg w={36} h={25}>
          <path d="M1.200 1.200h29v22.500h-29zM30.200 6h4.500v15.500c0 3-4.500 3-4.500 0" strokeWidth="2.400" />
          <path d="M5.500 6h21M17.500 11.500h9M17.500 15h9M17.500 19h9M6 11h8v8H6z" strokeWidth="2" />
        </Svg>
        <span>32°C</span>
        <span>Partly sunny</span>
      </button>
      <div className="ml-[18px]"><Tray /></div>
      <span className="mx-2.5 text-[17px]">ENG</span>
      <div className="flex w-[112px] shrink-0 flex-col items-center text-lg leading-7 whitespace-nowrap">
        <span>09:49 AM</span>
        <span>08-10-2023</span>
      </div>
      <TaskButton label="Notifications" width="w-[62px]">
        <Svg w={26} h={26}><path d="M1 1.500h24V20h-8l-4.500 4.500L9 20H1z" strokeWidth="1.500" /></Svg>
      </TaskButton>
      <span className="mr-1.5 ml-3 h-full w-px bg-[#7d8577]" />
    </footer>
  );
}

/* ---------- window ---------- */

const menus = ["File", "Data", "Worksheet", "Dashboard", "Story", "Analysis", "Map", "Format", "Server", "Window", "Help"];

export default function App() {
  return (
    <div className="flex min-h-screen flex-col border-2 border-[#b016e8] bg-[#f5f5f5] font-['Roboto','Open_Sans',sans-serif]">
      <header className="relative flex h-[34px] items-center bg-[#0078d7] pl-[3px] font-['Open_Sans','Noto_Sans',sans-serif] text-white">
        <span className="absolute top-0 left-1/2 h-0.5 w-[290px] -translate-x-[109px] bg-[#222]" />
        <span className="flex size-[21px] items-center justify-center bg-[#f4f4f4]">
          <TableauMark size={19} colors={blueMark} weight={1.8} />
        </span>
        <span className="flex-1 pl-[7px] text-[17px]">Tableau - STORY 1</span>
        <button type="button" aria-label="Minimize" className="flex h-full w-[70px] items-center justify-center">
          <Svg w={16} h={16}><path d="M0 8.500h15" /></Svg>
        </button>
        <button type="button" aria-label="Restore" className="flex h-full w-[70px] items-center justify-center">
          <Svg w={16} h={16}><path d="M.5 3.500h11v11H.5zM3.500 3.500v-3h11v11h-3" /></Svg>
        </button>
        <button type="button" aria-label="Close" className="flex h-full w-[72px] items-center justify-center">
          <Svg w={16} h={16}><path d="M.5.5l15 15M15.500.5l-15 15" strokeWidth="1.200" /></Svg>
        </button>
      </header>
      <nav className="flex h-[30px] items-center gap-4 bg-white pt-0.5 pl-2 font-['Open_Sans','Noto_Sans',sans-serif] text-[17px] text-black">
        {menus.map((m) => <button key={m} type="button">{m}</button>)}
      </nav>
      <Toolbar />
      <main className="flex flex-1 items-stretch">
        <DataPane />
        <div className="flex min-w-0 flex-1 gap-2 pr-2 pb-2 pl-2">
          <Cards />
          <Canvas />
        </div>
      </main>
      <SheetTabs />
      <StatusBar />
      <Taskbar />
    </div>
  );
}
